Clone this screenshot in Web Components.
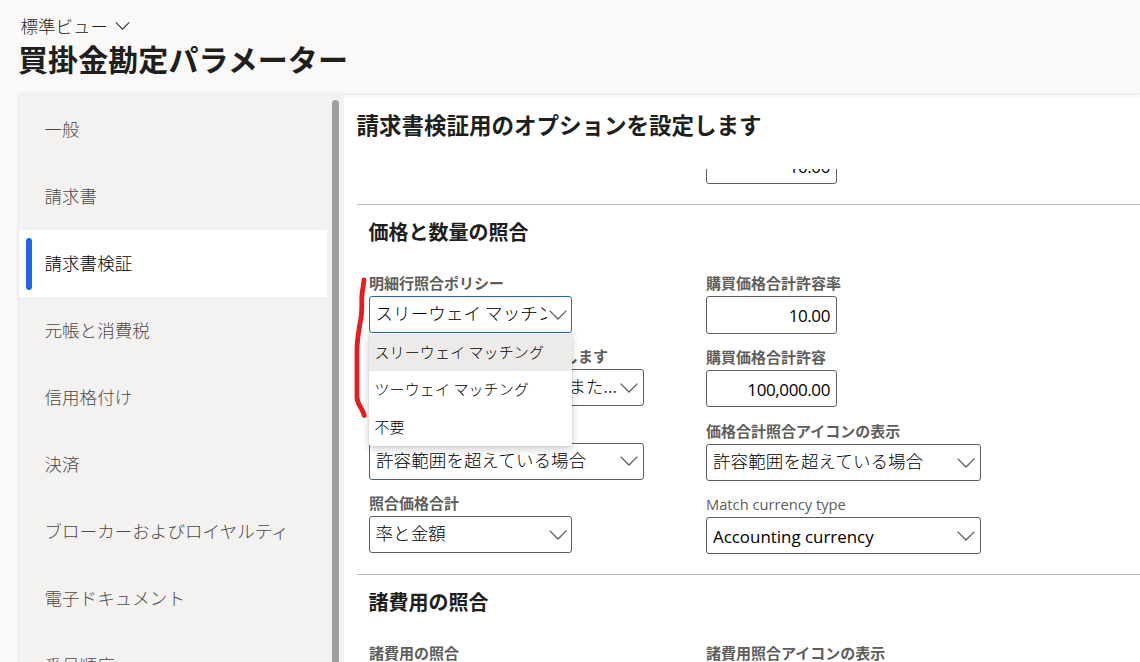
<!DOCTYPE html>
<html lang="ja">
<head>
<meta charset="utf-8">
<title>買掛金勘定パラメーター</title>
<style>
  html, body {
    margin: 0;
    height: 100%;
    overflow: hidden;
  }
  body {
    background: #faf9f8;
    color: #201f1e;
    font-family: "Noto Sans CJK JP", sans-serif;
    font-size: 17.5px;
    font-weight: 300;
  }
</style>
</head>
<body>
<parameters-page>
  <view-header slot="header" view="標準ビュー">買掛金勘定パラメーター</view-header>

  <side-nav slot="nav">
    <nav-item>一般</nav-item>
    <nav-item>請求書</nav-item>
    <nav-item selected>請求書検証</nav-item>
    <nav-item>元帳と消費税</nav-item>
    <nav-item>信用格付け</nav-item>
    <nav-item>決済</nav-item>
    <nav-item>ブローカーおよびロイヤルティ</nav-item>
    <nav-item>電子ドキュメント</nav-item>
    <nav-item>番号順序</nav-item>
  </side-nav>

  <tab-content heading="請求書検証用のオプションを設定します">
    <field-group style="--group-height: 35px; --group-pull: -22px">
      <number-field slot="right">10.00</number-field>
    </field-group>

    <field-group heading="価格と数量の照合" style="--group-height: 369px">
      <select-field slot="left" label="明細行照合ポリシー" size="small" open>
        スリーウェイ マッチング
        <option-list slot="menu">
          <option-item selected>スリーウェイ マッチング</option-item>
          <option-item>ツーウェイ マッチング</option-item>
          <option-item>不要</option-item>
        </option-list>
      </select-field>
      <select-field slot="left" label="します" align="end">また...</select-field>
      <select-field slot="left">許容範囲を超えている場合</select-field>
      <select-field slot="left" label="照合価格合計" size="small">率と金額</select-field>

      <number-field slot="right" label="購買価格合計許容率" style="--box-height: 38px">10.00</number-field>
      <number-field slot="right" label="購買価格合計許容">100,000.00</number-field>
      <select-field slot="right" label="価格合計照合アイコンの表示">許容範囲を超えている場合</select-field>
      <select-field slot="right" label="Match currency type" latin>Accounting currency</select-field>

      <pen-mark slot="mark"></pen-mark>
    </field-group>

    <field-group heading="諸費用の照合" style="--group-height: 200px">
      <select-field slot="left" label="諸費用の照合" size="small"></select-field>
      <select-field slot="right" label="諸費用照合アイコンの表示"></select-field>
    </field-group>
  </tab-content>
</parameters-page>

<script>
class ParametersPage extends HTMLElement {
  connectedCallback() {
    this.attachShadow({ mode: 'open' });
    this.shadowRoot.innerHTML = `
      <style>
        :host {
          display: flex;
          flex-direction: column;
          height: 100vh;
          overflow: hidden;
        }
        .panel {
          flex: 1;
          min-height: 0;
          display: grid;
          grid-template-columns: 325px 1fr;
          margin-left: 19px;
          background: #f3f2f1;
          box-shadow: 0 0 4px rgba(0, 0, 0, 0.13);
        }
      </style>
      <slot name="header"></slot>
      <div class="panel">
        <slot name="nav"></slot>
        <slot></slot>
      </div>
    `;
  }
}
customElements.define('parameters-page', ParametersPage);

class ChevronIcon extends HTMLElement {
  connectedCallback() {
    this.attachShadow({ mode: 'open' });
    this.shadowRoot.innerHTML = `
      <style>
        :host {
          display: block;
          flex: none;
          width: 18px;
          height: 10px;
          color: #605e5c;
        }
        svg {
          display: block;
          width: 100%;
          height: 100%;
        }
      </style>
      <svg viewBox="0 0 18 10" fill="none" stroke="currentColor" stroke-width="1.3">
        <path d="M0.6 0.6 L9 9 L17.4 0.6"/>
      </svg>
    `;
  }
}
customElements.define('chevron-icon', ChevronIcon);

class ViewHeader extends HTMLElement {
  connectedCallback() {
    this.attachShadow({ mode: 'open' });
    this.shadowRoot.innerHTML = `
      <style>
        :host {
          display: block;
          box-sizing: border-box;
          height: 95px;
          padding: 13px 0 0 18px;
        }
        .view {
          display: flex;
          align-items: center;
          gap: 7px;
          height: 25px;
          padding-left: 2.5px;
        }
        chevron-icon {
          width: 15px;
          height: 8px;
          color: #323130;
        }
        h1 {
          margin: 0;
          font-size: 30px;
          font-weight: 700;
          letter-spacing: 0.08px;
          line-height: 40px;
          white-space: nowrap;
        }
      </style>
      <div class="view">${this.getAttribute('view')}<chevron-icon></chevron-icon></div>
      <h1><slot></slot></h1>
    `;
  }
}
customElements.define('view-header', ViewHeader);

class SideNav extends HTMLElement {
  connectedCallback() {
    this.attachShadow({ mode: 'open' });
    this.shadowRoot.innerHTML = `
      <style>
        :host {
          display: grid;
          grid-template-columns: 308px 7px;
          column-gap: 5px;
          min-height: 0;
          overflow: hidden;
        }
        nav {
          padding-top: 1px;
        }
        .thumb {
          margin-top: 5px;
          border-radius: 4px 4px 0 0;
          background: #a19f9d;
        }
      </style>
      <nav><slot></slot></nav>
      <div class="thumb"></div>
    `;
  }
}
customElements.define('side-nav', SideNav);

class NavItem extends HTMLElement {
  connectedCallback() {
    this.attachShadow({ mode: 'open' });
    this.shadowRoot.innerHTML = `
      <style>
        :host {
          display: flex;
          align-items: center;
          gap: 12.5px;
          height: 67px;
          padding-left: 7px;
          color: #4c4a48;
          letter-spacing: 0.06px;
          white-space: nowrap;
        }
        :host([selected]) {
          background: #fff;
          color: #000;
        }
        .bar {
          width: 6px;
          height: 52px;
          border-radius: 3px;
        }
        :host([selected]) .bar {
          background: #2266e3;
        }
        .text {
          padding-bottom: 2px;
        }
      </style>
      <span class="bar"></span>
      <span class="text"><slot></slot></span>
    `;
  }
}
customElements.define('nav-item', NavItem);

class TabContent extends HTMLElement {
  connectedCallback() {
    this.attachShadow({ mode: 'open' });
    this.shadowRoot.innerHTML = `
      <style>
        :host {
          display: flex;
          flex-direction: column;
          min-height: 0;
          overflow: hidden;
          border-top: 3px solid #faf9f8;
          background: #fff;
        }
        h2 {
          margin: 0;
          height: 71px;
          padding-left: 12.5px;
          font-size: 22.5px;
          font-weight: 700;
          line-height: 53px;
        }
        .scroll {
          flex: 1;
          min-height: 0;
          padding-left: 13px;
          overflow: hidden;
        }
      </style>
      <h2>${this.getAttribute('heading')}</h2>
      <div class="scroll"><slot></slot></div>
    `;
  }
}
customElements.define('tab-content', TabContent);

class FieldGroup extends HTMLElement {
  connectedCallback() {
    const heading = this.getAttribute('heading');
    this.attachShadow({ mode: 'open' });
    this.shadowRoot.innerHTML = `
      <style>
        :host {
          display: flow-root;
          position: relative;
          height: var(--group-height);
          border-bottom: 1px solid #bdbbb9;
        }
        h3 {
          margin: 0;
          padding-left: 11.5px;
          height: 65px;
          font-size: 20px;
          font-weight: 700;
          line-height: 54px;
        }
        .columns {
          display: grid;
          grid-template-columns: 337px 1fr;
          padding-left: 12px;
          margin-top: var(--group-pull, 0);
        }
      </style>
      ${heading ? `<h3>${heading}</h3>` : ''}
      <div class="columns">
        <div><slot name="left"></slot></div>
        <div><slot name="right"></slot></div>
      </div>
      <slot name="mark"></slot>
    `;
  }
}
customElements.define('field-group', FieldGroup);

const fieldStyles = `
  :host {
    display: block;
    position: relative;
    width: 275px;
    height: 73.4px;
  }
  :host([size="small"]) {
    width: 203px;
  }
  label {
    display: block;
    height: 26px;
    color: #605e5c;
    font-size: 15px;
    font-weight: 700;
    line-height: 25px;
    white-space: nowrap;
  }
  .box {
    display: flex;
    align-items: center;
    box-sizing: border-box;
    height: var(--box-height, 37px);
    border: 1px solid #605e5c;
    border-radius: 3px;
    background: #fff;
    color: #000;
  }
`;

class SelectField extends HTMLElement {
  connectedCallback() {
    this.attachShadow({ mode: 'open' });
    this.shadowRoot.innerHTML = `
      <style>
        ${fieldStyles}
        .box {
          gap: 2px;
          padding: 0 5px 0 6px;
          letter-spacing: 0.1px;
        }
        :host([size="small"]) .box {
          padding-right: 4.3px;
          padding-left: 5.5px;
        }
        :host([open]) .box {
          border-color: #2266e3;
        }
        .value {
          flex: 1;
          min-width: 0;
          overflow: hidden;
          line-height: 32px;
          padding-bottom: 3px;
          white-space: nowrap;
        }
        :host([align="end"]) label {
          width: 239px;
          text-align: right;
        }
        :host([align="end"]) .value {
          padding-right: 1px;
          text-align: right;
        }
        :host([latin]) label {
          font-family: "Open Sans", sans-serif;
          font-size: 14.7px;
          font-weight: 500;
          line-height: 27px;
        }
        :host([latin]) .value {
          padding: 3px 0 0;
          font-family: "Open Sans", sans-serif;
          font-size: 16.9px;
          font-weight: 400;
          letter-spacing: 0;
        }
      </style>
      <label>${this.getAttribute('label') || ''}</label>
      <div class="box">
        <span class="value"><slot></slot></span>
        <chevron-icon></chevron-icon>
      </div>
      <slot name="menu"></slot>
    `;
  }
}
customElements.define('select-field', SelectField);

class NumberField extends HTMLElement {
  connectedCallback() {
    this.attachShadow({ mode: 'open' });
    this.shadowRoot.innerHTML = `
      <style>
        ${fieldStyles}
        :host {
          width: 131px;
          height: 74px;
        }
        .box {
          justify-content: flex-end;
          padding: 1px 6px 0 0;
          font-family: "Open Sans", sans-serif;
          font-size: 17px;
          font-weight: 400;
          letter-spacing: -0.4px;
        }
      </style>
      <label>${this.getAttribute('label') || ''}</label>
      <div class="box"><slot></slot></div>
    `;
    // Unlabelled fields carry no label row
    if (!this.hasAttribute('label')) {
      this.shadowRoot.querySelector('label').remove();
    }
  }
}
customElements.define('number-field', NumberField);

class OptionList extends HTMLElement {
  connectedCallback() {
    this.attachShadow({ mode: 'open' });
    this.shadowRoot.innerHTML = `
      <style>
        :host {
          position: absolute;
          z-index: 2;
          top: 63px;
          left: 0;
          right: 0;
          display: block;
          padding-top: 1px;
          background: #fff;
          border-radius: 0 0 3px 3px;
          overflow: hidden;
          box-shadow: 0 3px 8px rgba(0, 0, 0, 0.2), 0 0 2px rgba(0, 0, 0, 0.12);
        }
      </style>
      <slot></slot>
    `;
  }
}
customElements.define('option-list', OptionList);

class OptionItem extends HTMLElement {
  connectedCallback() {
    this.attachShadow({ mode: 'open' });
    this.shadowRoot.innerHTML = `
      <style>
        :host {
          display: block;
          height: 37.3px;
          padding-left: 5.5px;
          color: #000;
          font-size: 15px;
          letter-spacing: 0.1px;
          line-height: 35px;
          white-space: nowrap;
        }
        :host([selected]) {
          background: #edebe9;
        }
      </style>
      <slot></slot>
    `;
  }
}
customElements.define('option-item', OptionItem);

class PenMark extends HTMLElement {
  connectedCallback() {
    this.attachShadow({ mode: 'open' });
    this.shadowRoot.innerHTML = `
      <style>
        :host {
          position: absolute;
          z-index: 3;
          top: 72px;
          left: -5px;
          width: 17px;
          height: 142px;
        }
        svg {
          display: block;
        }
      </style>
      <svg width="17" height="142" viewBox="352 277 17 142" fill="none" stroke="#e81c1e" stroke-width="4.8" stroke-linecap="round" stroke-linejoin="round">
        <path d="M364 280 C363.5 287 361.8 291 361.8 298 C362 307 362 314 360.3 322 C358.5 332 357 340 357 350 L357 397 C357 405 361.5 406 364.3 415.5"/>
      </svg>
    `;
  }
}
customElements.define('pen-mark', PenMark);
</script>
</body>
</html>
